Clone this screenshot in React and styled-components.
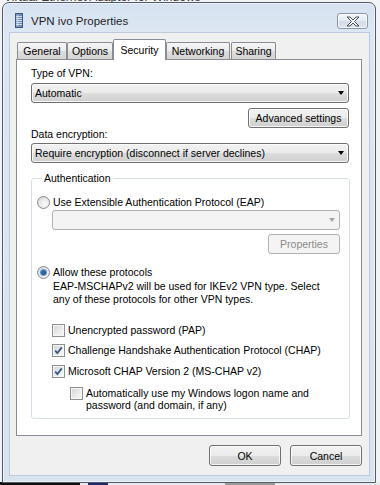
import React from "react";
import styled, { createGlobalStyle } from "styled-components";

const GlobalStyle = createGlobalStyle`
  html, body {
    margin: 0;
    padding: 0;
  }
  body {
    width: 380px;
    height: 485px;
    overflow: hidden;
    font-family: "Liberation Sans", Arial, sans-serif;
    font-size: 10.5px;
    color: #000;
  }
`;

const Desktop = styled.div`
  position: relative;
  width: 380px;
  height: 485px;
  overflow: hidden;
  background: #f2f3f5;
`;

/* bits of other windows peeking from behind */
const BehindText = styled.div`
  position: absolute;
  left: 4px;
  top: -10px;
  font-size: 12px;
  color: #3a3a3a;
  white-space: nowrap;
`;

const Taskbar = styled.div`
  position: absolute;
  left: 0;
  bottom: 0;
  width: 380px;
  height: 3px;
  background: linear-gradient(
    90deg,
    #111 0,
    #111 80px,
    #e8eaee 80px,
    #e8eaee 88px,
    #1d2a6e 88px,
    #1d2a6e 108px,
    #e8eaee 108px,
    #e8eaee 225px,
    #9a9a9a 225px,
    #9a9a9a 275px,
    #e8eaee 275px
  );
`;

const Window = styled.div`
  position: absolute;
  left: 2px;
  top: 2px;
  box-sizing: border-box;
  width: 374px;
  height: 481px;
  border: 1px solid #515a66;
  border-radius: 7px 7px 0 0;
  background: linear-gradient(180deg, #d6e2f0 0%, #dde7f3 30px, #d8e3f0 100%);
  box-shadow: inset 0 0 0 1px rgba(255, 255, 255, 0.55);
  padding: 0 5px 6px 6px;
  display: flex;
  flex-direction: column;
`;

const TitleBar = styled.div`
  height: 29px;
  display: flex;
  align-items: flex-start;
  padding-left: 6px;
`;

const TitleIcon = styled.svg`
  margin-top: 10px;
  flex-shrink: 0;
`;

const TitleText = styled.div`
  margin: 11px 0 0 8px;
  font-size: 11.5px;
  line-height: 14px;
  color: #1e1e1e;
  flex: 1;
`;

const CloseButton = styled.div`
  box-sizing: border-box;
  margin: 10px 2px 0 0;
  width: 31px;
  height: 16px;
  border: 1px solid #8797ad;
  border-radius: 3px;
  background: linear-gradient(180deg, #f3f6fa 0%, #e4eaf2 50%, #d3dce8 51%, #dde4ee 100%);
  box-shadow: inset 0 0 0 1px rgba(255, 255, 255, 0.7);
  display: flex;
  align-items: center;
  justify-content: center;
`;

const Client = styled.div`
  flex: 1;
  background: #f0f0f0;
  border: 1px solid #bccadb;
  padding: 6px 7px 0 6px;
  display: flex;
  flex-direction: column;
`;

const TabRow = styled.div`
  display: flex;
  align-items: flex-end;
  padding-left: 1px;
  margin-bottom: -1px;
  position: relative;
  z-index: 1;
`;

const Tab = styled.div`
  box-sizing: border-box;
  width: ${(p) => p.$w}px;
  height: ${(p) => (p.$active ? 21 : 17)}px;
  margin: 0 0 ${(p) => (p.$active ? 0 : 1)}px ${(p) => p.$gap || 0}px;
  border: 1px solid #898c95;
  border-bottom: none;
  border-radius: 2px 2px 0 0;
  background: ${(p) =>
    p.$active
      ? "#fff"
      : "linear-gradient(180deg, #f5f5f5 0%, #ebebeb 50%, #dedede 51%, #d4d4d4 100%)"};
  display: flex;
  align-items: center;
  justify-content: center;
  white-space: nowrap;
`;

const Panel = styled.div`
  background: #fff;
  border: 1px solid #898c95;
  padding: 7px 12px 16px 14px;
  display: flex;
  flex-direction: column;
`;

const Label = styled.div`
  line-height: 12px;
  margin-top: ${(p) => p.$mt || 0}px;
`;

const Combo = styled.div`
  box-sizing: border-box;
  height: 20px;
  margin-top: ${(p) => p.$mt || 0}px;
  margin-left: ${(p) => p.$ml || 0}px;
  border: 1px solid ${(p) => (p.$disabled ? "#adb2b5" : "#707070")};
  border-radius: 3px;
  background: ${(p) =>
    p.$disabled
      ? "#f4f4f4"
      : "linear-gradient(180deg, #f2f2f2 0%, #ebebeb 50%, #dddddd 51%, #cfcfcf 100%)"};
  box-shadow: inset 0 0 0 1px ${(p) => (p.$disabled ? "transparent" : "rgba(255,255,255,0.8)")};
  padding: 0 4px 0 3px;
  display: flex;
  align-items: center;
  justify-content: space-between;
  white-space: nowrap;
`;

const Arrow = styled.span`
  width: 0;
  height: 0;
  border-left: 3.5px solid transparent;
  border-right: 3.5px solid transparent;
  border-top: 4px solid ${(p) => (p.$disabled ? "#a6a6a6" : "#000")};
`;

const ButtonRow = styled.div`
  display: flex;
  justify-content: flex-end;
  gap: 9px;
  margin-top: ${(p) => p.$mt || 0}px;
`;

const Button = styled.div`
  box-sizing: border-box;
  height: ${(p) => p.$h || 20}px;
  width: ${(p) => (p.$w ? `${p.$w}px` : "auto")};
  padding: 0 6px;
  border: 1px solid ${(p) => (p.$disabled ? "#adb2b5" : "#707070")};
  border-radius: 3px;
  color: ${(p) => (p.$disabled ? "#8a8a8a" : "#000")};
  background: ${(p) =>
    p.$disabled
      ? "#f4f4f4"
      : "linear-gradient(180deg, #f2f2f2 0%, #ebebeb 50%, #dddddd 51%, #cfcfcf 100%)"};
  box-shadow: inset 0 0 0 1px ${(p) => (p.$disabled ? "transparent" : "rgba(255,255,255,0.8)")};
  display: flex;
  align-items: center;
  justify-content: center;
  white-space: nowrap;
`;

const GroupBox = styled.fieldset`
  margin: 9px -1px 0 0;
  padding: 0 9px 7px 5px;
  min-width: 0;
  border: 1px solid #d5dfe5;
  border-radius: 3px;
  display: flex;
  flex-direction: column;
`;

const Legend = styled.legend`
  margin-left: 5px;
  padding: 0 2px;
  line-height: 12px;
`;

const OptionRow = styled.div`
  display: flex;
  align-items: ${(p) => (p.$top ? "flex-start" : "center")};
  gap: 3px;
  min-height: 14px;
  margin-top: ${(p) => p.$mt || 0}px;
  margin-left: ${(p) => p.$ml || 0}px;
  line-height: 12px;
`;

const Radio = styled.span`
  box-sizing: border-box;
  width: 13px;
  height: 13px;
  flex-shrink: 0;
  border-radius: 50%;
  border: 1px solid #8b8b8b;
  background: radial-gradient(circle at 60% 65%, #fbfbfb 0%, #e6e6e6 55%, #c9c9c9 100%);
  display: flex;
  align-items: center;
  justify-content: center;
  &::after {
    content: "";
    width: 5px;
    height: 5px;
    border-radius: 50%;
    background: ${(p) =>
      p.$checked ? "radial-gradient(circle at 45% 40%, #3d7cc0 0%, #123f78 80%)" : "transparent"};
    box-shadow: ${(p) => (p.$checked ? "0 0 0 1px #5d9ad6" : "none")};
  }
`;

const Check = styled.span`
  box-sizing: border-box;
  width: 13px;
  height: 13px;
  flex-shrink: 0;
  border: 1px solid #8e8f8f;
  background: linear-gradient(135deg, #cfd2d6 0%, #eceded 60%, #fafafa 100%);
  box-shadow: inset 0 0 0 1px #f6f6f6;
  display: flex;
  align-items: center;
  justify-content: center;
`;

const Description = styled.div`
  margin: 1px 0 0 16px;
  line-height: 13px;
`;

const TickIcon = () => (
  <svg width="9" height="9" viewBox="0 0 9 9">
    <path d="M1.2 4.6 L3.4 7 L7.8 1.4" fill="none" stroke="#3b5687" strokeWidth="1.8" />
  </svg>
);

const CheckBox = ({ checked }) => <Check>{checked && <TickIcon />}</Check>;

const tabs = [
  { name: "General", w: 50 },
  { name: "Options", w: 46 },
  { name: "Security", w: 53, active: true },
  { name: "Networking", w: 64 },
  { name: "Sharing", w: 45, gap: 1 },
];

const App = () => {
  return (
    <>
      <GlobalStyle />
      <Desktop>
        <BehindText>Virtual Ethernet Adapter for Windows</BehindText>
        <Taskbar />
        <Window>
          <TitleBar>
            <TitleIcon width="8" height="15" viewBox="0 0 8 15">
              <rect x="0.5" y="0.5" width="7" height="14" fill="#6d8db4" stroke="#3d5878" />
              <rect x="1.5" y="1.5" width="2" height="12" fill="#9fb8d6" />
              <path d="M1 3.5h6M1 5.5h6M1 7.5h6M1 9.5h6M1 11.5h6" stroke="#e6eef8" strokeWidth="0.8" />
            </TitleIcon>
            <TitleText>VPN ivo Properties</TitleText>
            <CloseButton>
              <svg width="14" height="11" viewBox="-1 -1 14 11">
                <path
                  d="M0 0 H3 L6 3 L9 0 H12 L7.5 4.5 L12 9 H9 L6 6 L3 9 H0 L4.5 4.5 Z"
                  fill="#fff"
                  stroke="#3f4d63"
                  strokeWidth="1"
                  strokeLinejoin="round"
                />
              </svg>
            </CloseButton>
          </TitleBar>
          <Client>
            <TabRow>
              {tabs.map((t) => (
                <Tab key={t.name} $w={t.w} $gap={t.gap} $active={t.active}>
                  {t.name}
                </Tab>
              ))}
            </TabRow>
            <Panel>
              <Label>Type of VPN:</Label>
              <Combo $mt={4}>
                <span>Automatic</span>
                <Arrow />
              </Combo>
              <ButtonRow $mt={5}>
                <Button $w={101}>Advanced settings</Button>
              </ButtonRow>
              <Label>Data encryption:</Label>
              <Combo $mt={3}>
                <span>Require encryption (disconnect if server declines)</span>
                <Arrow />
              </Combo>
              <GroupBox>
                <Legend>Authentication</Legend>
                <OptionRow $mt={11}>
                  <Radio />
                  <span>Use Extensible Authentication Protocol (EAP)</span>
                </OptionRow>
                <Combo $mt={1} $ml={15} $disabled>
                  <span />
                  <Arrow $disabled />
                </Combo>
                <ButtonRow $mt={4}>
                  <Button $w={72} $disabled>
                    Properties
                  </Button>
                </ButtonRow>
                <OptionRow $mt={11}>
                  <Radio $checked />
                  <span>Allow these protocols</span>
                </OptionRow>
                <Description>
                  EAP-MSCHAPv2 will be used for IKEv2 VPN type. Select
                  <br />
                  any of these protocols for other VPN types.
                </Description>
                <OptionRow $mt={17} $ml={15}>
                  <CheckBox />
                  <span>Unencrypted password (PAP)</span>
                </OptionRow>
                <OptionRow $mt={6} $ml={15}>
                  <CheckBox checked />
                  <span>Challenge Handshake Authentication Protocol (CHAP)</span>
                </OptionRow>
                <OptionRow $mt={7} $ml={15}>
                  <CheckBox checked />
                  <span>Microsoft CHAP Version 2 (MS-CHAP v2)</span>
                </OptionRow>
                <OptionRow $mt={9} $ml={33} $top>
                  <CheckBox />
                  <span>
                    Automatically use my Windows logon name and
                    <br />
                    password (and domain, if any)
                  </span>
                </OptionRow>
              </GroupBox>
            </Panel>
            <ButtonRow $mt={9}>
              <Button $w={72} $h={21}>
                OK
              </Button>
              <Button $w={72} $h={21}>
                Cancel
              </Button>
            </ButtonRow>
          </Client>
        </Window>
      </Desktop>
    </>
  );
};

export default App;
